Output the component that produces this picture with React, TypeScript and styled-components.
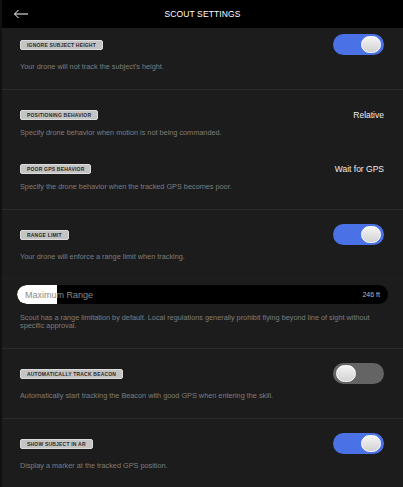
import styled, { createGlobalStyle } from 'styled-components';

const GlobalStyle = createGlobalStyle`
  html, body {
    margin: 0;
    padding: 0;
    background: #1c1c1c;
  }
  body {
    font-family: 'Liberation Sans', Arial, sans-serif;
    -webkit-font-smoothing: antialiased;
  }
`;

const Page = styled.div`
  width: 403px;
  height: 487px;
  overflow: hidden;
  background: #1c1c1c;
  border-left: 2px solid #111;
  box-sizing: border-box;
  display: flex;
  flex-direction: column;
`;

const Header = styled.div`
  height: 28px;
  flex: 0 0 28px;
  background: #000;
  display: flex;
  align-items: center;
  justify-content: center;
  position: relative;
`;

const BackButton = styled.button`
  position: absolute;
  left: 11px;
  top: 8px;
  width: 16px;
  height: 12px;
  padding: 0;
  border: 0;
  background: none;
  display: flex;
  align-items: center;
  justify-content: center;
`;

const Title = styled.div`
  color: #fff;
  font-size: 8.5px;
  font-weight: 500;
  letter-spacing: 0.1px;
`;

const Section = styled.div<{ $padTop?: number }>`
  padding: ${(p) => p.$padTop ?? 14}px 19px 18px 18px;
  border-bottom: 1px solid #2a2a2a;
  display: flex;
  flex-direction: column;
  flex-shrink: 0;
`;

const Setting = styled.div`
  display: flex;
  flex-direction: column;
  & + & {
    margin-top: 21px;
  }
`;

const Row = styled.div`
  height: 21px;
  display: flex;
  align-items: center;
  justify-content: space-between;
`;

const Tag = styled.span`
  display: inline-flex;
  align-items: center;
  height: 10px;
  padding: 0 6px;
  box-sizing: border-box;
  background: #c4c4c4;
  border: 1px solid #dcdcdc;
  border-radius: 2px;
  color: #2a2a2a;
  font-size: 5px;
  font-weight: 700;
  letter-spacing: 0.2px;
  text-transform: uppercase;
  white-space: nowrap;
`;

const Value = styled.span`
  color: #eee;
  font-size: 8.5px;
`;

const Description = styled.p<{ $gap: number }>`
  margin: ${(p) => p.$gap}px 0 0;
  color: #7c7c7c;
  font-size: 7.3px;
  line-height: 8px;
`;

const Track = styled.div<{ $on: boolean }>`
  width: 51px;
  height: 21px;
  border-radius: 11px;
  background: ${(p) => (p.$on ? '#4a72e6' : '#646464')};
  display: flex;
  align-items: center;
  justify-content: ${(p) => (p.$on ? 'flex-end' : 'flex-start')};
  padding: 0 3px;
  box-sizing: border-box;
`;

const Knob = styled.div`
  width: 20px;
  height: 17px;
  border-radius: 9px;
  box-sizing: border-box;
  border: 1.5px solid #fff;
  background: linear-gradient(180deg, #f4f4f4 0%, #d2d2d2 100%);
`;

const SubBlock = styled.div`
  margin: 17px -19px 0 -18px;
  padding: 6px 15px 0 15px;
  border-top: 1px solid #202020;
`;

const Slider = styled.div`
  position: relative;
  height: 19px;
  border-radius: 10px;
  background: #000;
  display: flex;
  align-items: center;
  justify-content: space-between;
  padding: 0 8px;
  overflow: hidden;
`;

const SliderFill = styled.div`
  position: absolute;
  left: 0;
  top: 0;
  bottom: 0;
  background: #fff;
  border-radius: 10px 0 0 10px;
`;

const SliderLabel = styled.span`
  position: relative;
  color: #8a8a8a;
  font-size: 9px;
`;

const SliderValue = styled.span`
  position: relative;
  color: #bdbdbd;
  font-size: 7px;
`;

const SubDescription = styled(Description)`
  padding-left: 3px;
  padding-right: 3px;
`;

const Toggle = ({ on }: { on: boolean }) => (
  <Track $on={on}>
    <Knob />
  </Track>
);

const BackArrow = () => (
  <svg width="16" height="10" viewBox="0 0 16 10" fill="none">
    <path d="M15 5H1.5M5.5 1L1.5 5L5.5 9" stroke="#fff" strokeWidth="1" />
  </svg>
);

type SettingProps = {
  label: string;
  description: string;
  toggle?: boolean;
  value?: string;
};

const SettingItem = ({ label, description, toggle, value }: SettingProps) => (
  <Setting>
    <Row>
      <Tag>{label}</Tag>
      {toggle !== undefined ? <Toggle on={toggle} /> : <Value>{value}</Value>}
    </Row>
    <Description $gap={toggle !== undefined ? 8 : 4}>{description}</Description>
  </Setting>
);

const App = () => {
  const range = 246;
  const fillWidth = 40;

  return (
    <>
      <GlobalStyle />
      <Page>
        <Header>
          <BackButton>
            <BackArrow />
          </BackButton>
          <Title>SCOUT SETTINGS</Title>
        </Header>

        <Section $padTop={6}>
          <SettingItem
            label="Ignore subject height"
            description="Your drone will not track the subject's height."
            toggle
          />
        </Section>

        <Section>
          <SettingItem
            label="Positioning behavior"
            description="Specify drone behavior when motion is not being commanded."
            value="Relative"
          />
          <SettingItem
            label="Poor GPS behavior"
            description="Specify the drone behavior when the tracked GPS becomes poor."
            value="Wait for GPS"
          />
        </Section>

        <Section>
          <SettingItem
            label="Range limit"
            description="Your drone will enforce a range limit when tracking."
            toggle
          />
          <SubBlock>
            <Slider>
              <SliderFill style={{ width: fillWidth }} />
              <SliderLabel>Maximum Range</SliderLabel>
              <SliderValue>{range} ft</SliderValue>
            </Slider>
            <SubDescription $gap={10}>
              Scout has a range limitation by default. Local regulations generally prohibit flying
              beyond line of sight without specific approval.
            </SubDescription>
          </SubBlock>
        </Section>

        <Section>
          <SettingItem
            label="Automatically track beacon"
            description="Automatically start tracking the Beacon with good GPS when entering the skill."
            toggle={false}
          />
        </Section>

        <Section>
          <SettingItem
            label="Show subject in AR"
            description="Display a marker at the tracked GPS position."
            toggle
          />
        </Section>
      </Page>
    </>
  );
};

export default App;
